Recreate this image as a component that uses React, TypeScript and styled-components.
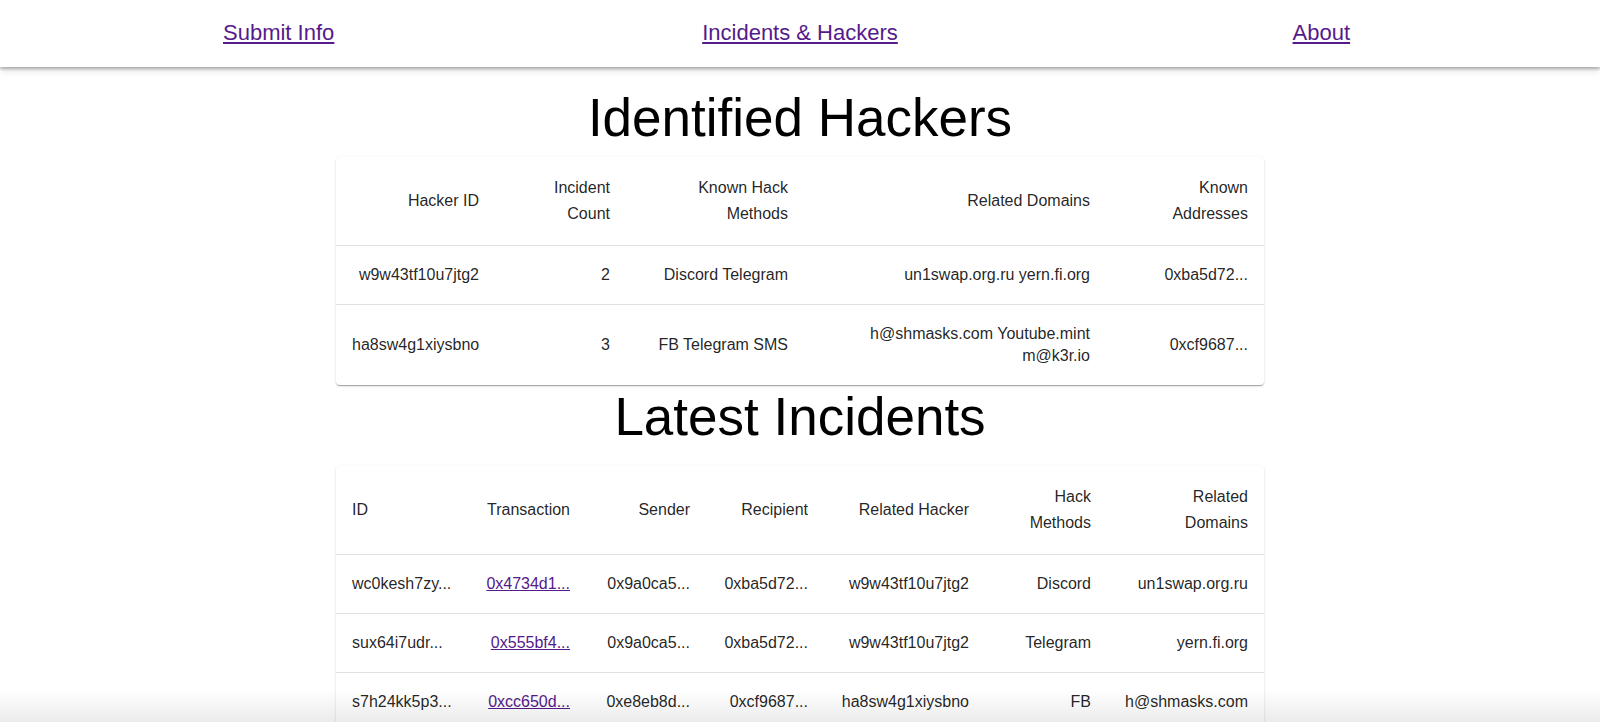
import styled, { createGlobalStyle } from "styled-components";

const GlobalStyle = createGlobalStyle`
  html {
    scrollbar-width: none;
  }
  body {
    margin: 0;
    background: #fff;
    color: rgba(0, 0, 0, 0.87);
    font-family: "Liberation Sans", Arial, Helvetica, sans-serif;
  }
  body::-webkit-scrollbar {
    display: none;
  }
`;

const NavBar = styled.nav`
  position: relative;
  z-index: 2;
  display: grid;
  grid-template-columns: repeat(3, 1fr);
  align-items: start;
  height: 67px;
  box-sizing: border-box;
  padding: 20px 18px 0;
  background: #fff;
  box-shadow: 0 2px 3px rgba(0, 0, 0, 0.28), 0 4px 8px rgba(0, 0, 0, 0.1);
`;

const NavLink = styled.a`
  justify-self: center;
  font-size: 22px;
  color: #551a8b;
  text-decoration: underline;
`;

const Main = styled.main`
  display: flex;
  flex-direction: column;
  align-items: center;
`;

const Title = styled.h1<{ $gapTop: number; $gapBottom: number }>`
  margin: ${(p) => p.$gapTop}px 0 ${(p) => p.$gapBottom}px;
  font-size: 53px;
  font-weight: 400;
  line-height: normal;
  color: #000;
`;

const Paper = styled.div`
  width: 928px;
  background: #fff;
  border-radius: 4px;
  box-shadow: 0 2px 1px -1px rgba(0, 0, 0, 0.2), 0 1px 1px 0 rgba(0, 0, 0, 0.14),
    0 1px 3px 0 rgba(0, 0, 0, 0.12);
  overflow: hidden;
`;

const Table = styled.table`
  width: 100%;
  border-collapse: collapse;
  table-layout: fixed;
`;

const Col = styled.col<{ $w: number }>`
  width: ${(p) => p.$w}px;
`;

const HeadCell = styled.th<{ $align: "left" | "right" }>`
  padding: 18px 16px;
  font-size: 16px;
  font-weight: 400;
  line-height: 26px;
  text-align: ${(p) => p.$align};
  vertical-align: middle;
  color: rgba(0, 0, 0, 0.87);
  border-bottom: 1px solid #e0e0e0;
`;

const Row = styled.tr`
  &:last-child td {
    border-bottom: none;
  }
`;

const BodyCell = styled.td<{ $align: "left" | "right" }>`
  padding: 18px 16px;
  font-size: 16px;
  line-height: 22px;
  text-align: ${(p) => p.$align};
  vertical-align: middle;
  color: rgba(0, 0, 0, 0.87);
  border-bottom: 1px solid #e0e0e0;
`;

const TxLink = styled.a`
  color: #551a8b;
  text-decoration: underline;
`;

const BottomShade = styled.div`
  position: fixed;
  left: 0;
  right: 0;
  bottom: 0;
  height: 32px;
  pointer-events: none;
  background: linear-gradient(to bottom, rgba(0, 0, 0, 0), rgba(0, 0, 0, 0.08));
`;

interface Column {
  lines: string[];
  width: number;
  align: "left" | "right";
}

const hackerColumns: Column[] = [
  { lines: ["Hacker ID"], width: 159, align: "right" },
  { lines: ["Incident", "Count"], width: 131, align: "right" },
  { lines: ["Known Hack", "Methods"], width: 178, align: "right" },
  { lines: ["Related Domains"], width: 302, align: "right" },
  { lines: ["Known", "Addresses"], width: 158, align: "right" },
];

const hackers = [
  ["w9w43tf10u7jtg2", "2", "Discord Telegram", "un1swap.org.ru yern.fi.org", "0xba5d72..."],
  ["ha8sw4g1xiysbno", "3", "FB Telegram SMS", "h@shmasks.com Youtube.mint m@k3r.io", "0xcf9687..."],
];

const incidentColumns: Column[] = [
  { lines: ["ID"], width: 130, align: "left" },
  { lines: ["Transaction"], width: 120, align: "right" },
  { lines: ["Sender"], width: 120, align: "right" },
  { lines: ["Recipient"], width: 118, align: "right" },
  { lines: ["Related Hacker"], width: 161, align: "right" },
  { lines: ["Hack", "Methods"], width: 122, align: "right" },
  { lines: ["Related", "Domains"], width: 157, align: "right" },
];

const incidents = [
  ["wc0kesh7zy...", "0x4734d1...", "0x9a0ca5...", "0xba5d72...", "w9w43tf10u7jtg2", "Discord", "un1swap.org.ru"],
  ["sux64i7udr...", "0x555bf4...", "0x9a0ca5...", "0xba5d72...", "w9w43tf10u7jtg2", "Telegram", "yern.fi.org"],
  ["s7h24kk5p3...", "0xcc650d...", "0xe8eb8d...", "0xcf9687...", "ha8sw4g1xiysbno", "FB", "h@shmasks.com"],
];

function DataTable({
  columns,
  rows,
  linkColumn,
}: {
  columns: Column[];
  rows: string[][];
  linkColumn?: number;
}) {
  return (
    <Paper>
      <Table>
        <colgroup>
          {columns.map((c, i) => (
            <Col key={i} $w={c.width} />
          ))}
        </colgroup>
        <thead>
          <tr>
            {columns.map((c, i) => (
              <HeadCell key={i} $align={c.align}>
                {c.lines.map((line, j) => (
                  <span key={j}>
                    {j > 0 && <br />}
                    {line}
                  </span>
                ))}
              </HeadCell>
            ))}
          </tr>
        </thead>
        <tbody>
          {rows.map((row, r) => (
            <Row key={r}>
              {row.map((value, i) => (
                <BodyCell key={i} $align={columns[i].align}>
                  {i === linkColumn ? <TxLink href="#">{value}</TxLink> : value}
                </BodyCell>
              ))}
            </Row>
          ))}
        </tbody>
      </Table>
    </Paper>
  );
}

export default function App() {
  return (
    <>
      <GlobalStyle />
      <NavBar>
        <NavLink href="#">Submit Info</NavLink>
        <NavLink href="#">Incidents &amp; Hackers</NavLink>
        <NavLink href="#">About</NavLink>
      </NavBar>
      <Main>
        <Title $gapTop={20} $gapBottom={9}>
          Identified Hackers
        </Title>
        <DataTable columns={hackerColumns} rows={hackers} />
        <Title $gapTop={1} $gapBottom={19}>
          Latest Incidents
        </Title>
        <DataTable columns={incidentColumns} rows={incidents} linkColumn={1} />
      </Main>
      <BottomShade />
    </>
  );
}
